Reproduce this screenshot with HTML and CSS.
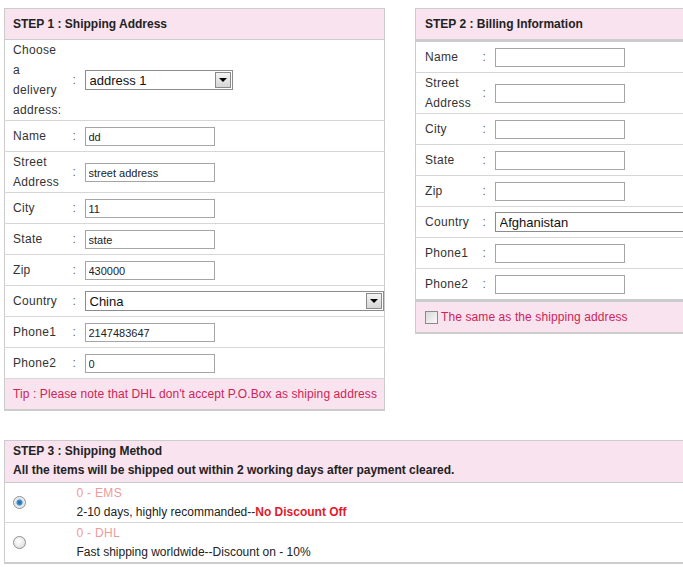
FILE: index.html
```html
<!DOCTYPE html>
<html lang="en">
<head>
    <meta charset="UTF-8">
    <title>Checkout</title>
    <link rel="stylesheet" href="styles.css">
</head>
<body>

<div class="steps">
    <table class="box step1">
        <colgroup><col class="c-label"><col class="c-colon"><col></colgroup>
        <tr><th colspan="3">STEP 1 : Shipping Address</th></tr>
        <tr>
            <td class="label">Choose a delivery address:</td>
            <td class="colon">:</td>
            <td>
                <div class="select-wrap addr">
                    <select><option>address 1</option></select>
                    <span class="arrow"></span>
                </div>
            </td>
        </tr>
        <tr><td class="label">Name</td><td class="colon">:</td><td><input type="text" value="dd"></td></tr>
        <tr><td class="label">Street Address</td><td class="colon">:</td><td><input type="text" value="street address"></td></tr>
        <tr><td class="label">City</td><td class="colon">:</td><td><input type="text" value="11"></td></tr>
        <tr><td class="label">State</td><td class="colon">:</td><td><input type="text" value="state"></td></tr>
        <tr><td class="label">Zip</td><td class="colon">:</td><td><input type="text" value="430000"></td></tr>
        <tr>
            <td class="label">Country</td>
            <td class="colon">:</td>
            <td>
                <div class="select-wrap country">
                    <select><option>China</option></select>
                    <span class="arrow"></span>
                </div>
            </td>
        </tr>
        <tr><td class="label">Phone1</td><td class="colon">:</td><td><input type="text" value="2147483647"></td></tr>
        <tr><td class="label">Phone2</td><td class="colon">:</td><td><input type="text" value="0"></td></tr>
        <tr class="tip"><td colspan="3">Tip : Please note that DHL don't accept P.O.Box as shiping address</td></tr>
    </table>

    <table class="box step2">
        <colgroup><col class="c-label"><col class="c-colon"><col></colgroup>
        <tr><th colspan="3">STEP 2 : Billing Information</th></tr>
        <tr><td class="label">Name</td><td class="colon">:</td><td><input type="text"></td></tr>
        <tr><td class="label">Street Address</td><td class="colon">:</td><td><input type="text"></td></tr>
        <tr><td class="label">City</td><td class="colon">:</td><td><input type="text"></td></tr>
        <tr><td class="label">State</td><td class="colon">:</td><td><input type="text"></td></tr>
        <tr><td class="label">Zip</td><td class="colon">:</td><td><input type="text"></td></tr>
        <tr>
            <td class="label">Country</td>
            <td class="colon">:</td>
            <td>
                <div class="select-wrap country2">
                    <select><option>Afghanistan</option></select>
                </div>
            </td>
        </tr>
        <tr><td class="label">Phone1</td><td class="colon">:</td><td><input type="text"></td></tr>
        <tr><td class="label">Phone2</td><td class="colon">:</td><td><input type="text"></td></tr>
        <tr class="tip">
            <td colspan="3"><label class="same"><input type="checkbox">The same as the shipping address</label></td>
        </tr>
    </table>
</div>

<table class="box step3">
    <colgroup><col class="c-radio"><col></colgroup>
    <tr>
        <th colspan="2">
            STEP 3 : Shipping Method<br>
            All the items will be shipped out within 2 working days after payment cleared.
        </th>
    </tr>
    <tr>
        <td class="radio-cell"><input type="radio" name="ship" checked></td>
        <td>
            <div class="method">0 - EMS</div>
            <div>2-10 days, highly recommanded--<span class="no-discount">No Discount Off</span></div>
        </td>
    </tr>
    <tr>
        <td class="radio-cell"><input type="radio" name="ship"></td>
        <td>
            <div class="method">0 - DHL</div>
            <div>Fast shipping worldwide--Discount on - 10%</div>
        </td>
    </tr>
</table>

</body>
</html>
```

FILE: styles.css
```css
body {
    margin: 8px 0 0 4px;
    font-family: "Liberation Sans", Arial, sans-serif;
    font-size: 12px;
    color: #333;
    background: #fff;
    overflow: hidden;
}

.steps {
    display: flex;
    align-items: flex-start;
    gap: 30px;
}

.box {
    flex-shrink: 0;
    table-layout: fixed;
    border-collapse: collapse;
    border: 1px solid #ccc;
    border-bottom: 2px solid #ccc;
}

.box th {
    background-color: #f9e3ef;
    text-align: left;
    font-weight: bold;
    color: #222;
    height: 30px;
    padding: 0 0 0 8px;
    border-bottom: 1px solid #ccc;
}

.box td {
    height: 30px;
    padding: 0;
    line-height: 20px;
    vertical-align: middle;
    border-bottom: 1px solid #d6d6d6;
}

.c-colon {
    width: 14px;
}

.step1 {
    width: 381px;
}

.step1 .c-label {
    width: 65px;
}

.step1 .label {
    padding: 0 8px 0 8px;
    letter-spacing: 0.3px;
}

.step1 .colon {
    padding-left: 3px;
}

.step2 {
    width: 300px;
}

.step2 .c-label {
    width: 64px;
}

.step2 th {
    padding-left: 9px;
    border-bottom: 3px solid #ccc;
}

.step2 .label {
    padding-left: 9px;
    letter-spacing: 0.3px;
}

.step2 .colon {
    padding-left: 3px;
}

.step2 .tip td {
    border-top: 3px solid #ccc;
}

.colon {
    color: #666;
}

input[type="text"] {
    box-sizing: border-box;
    width: 130px;
    height: 19px;
    margin: 0 0 0 1px;
    padding: 0 3px;
    border: 1px solid #a5a5a5;
    font-family: "Liberation Sans", Arial, sans-serif;
    font-size: 11px;
    color: #222;
    vertical-align: middle;
}

.select-wrap {
    position: relative;
    display: inline-block;
    margin-left: 1px;
    vertical-align: middle;
}

.select-wrap select {
    appearance: none;
    -webkit-appearance: none;
    box-sizing: border-box;
    width: 100%;
    height: 20px;
    padding: 0 4px;
    border: 1px solid #8c8c8c;
    border-radius: 0;
    background: #fff;
    font-family: "Liberation Sans", Arial, sans-serif;
    font-size: 13px;
    color: #111;
    display: block;
}

.addr {
    width: 148px;
}

.country {
    width: 299px;
}

.country2 {
    width: 220px;
}

.arrow {
    position: absolute;
    top: 2px;
    right: 2px;
    width: 14px;
    height: 14px;
    border: 1px solid #8a8a8a;
    background: linear-gradient(#f4f4f4, #d6d6d6);
}

.arrow::after {
    content: "";
    position: absolute;
    left: 3px;
    top: 5px;
    border-left: 4px solid transparent;
    border-right: 4px solid transparent;
    border-top: 4px solid #000;
}

.tip td {
    background-color: #f9e3ef;
    color: #cf2357;
    padding-left: 8px;
    border-bottom: none;
    white-space: nowrap;
    letter-spacing: 0.1px;
}

.same {
    display: flex;
    align-items: center;
    margin-left: 1px;
}

.same input {
    appearance: none;
    -webkit-appearance: none;
    width: 13px;
    height: 13px;
    margin: 0 3px 0 0;
    border: 1px solid #8a8a8a;
    background: linear-gradient(135deg, #d8d8d8, #fafafa);
}

.step3 {
    width: 700px;
    margin-top: 29px;
}

.step3 th {
    height: auto;
    padding: 1px 8px 2px;
    line-height: 19px;
}

.step3 td {
    height: 39px;
    line-height: 19px;
    color: #222;
}

.c-radio {
    width: 72px;
}

.radio-cell input {
    appearance: none;
    -webkit-appearance: none;
    width: 13px;
    height: 13px;
    margin: 0 0 0 8px;
    border: 1px solid #8f8f8f;
    border-radius: 50%;
    background: radial-gradient(circle at 40% 35%, #fff, #d8d8d8);
    vertical-align: middle;
}

.radio-cell input:checked {
    background: radial-gradient(circle, #1e6aa8 0, #3a8fd0 2.5px, #d8e2ea 3.5px, #f4f4f4 6px);
}

.method {
    color: #ee9a9a;
    letter-spacing: 0.3px;
}

.no-discount {
    color: #e01b2b;
    font-weight: bold;
}
```
